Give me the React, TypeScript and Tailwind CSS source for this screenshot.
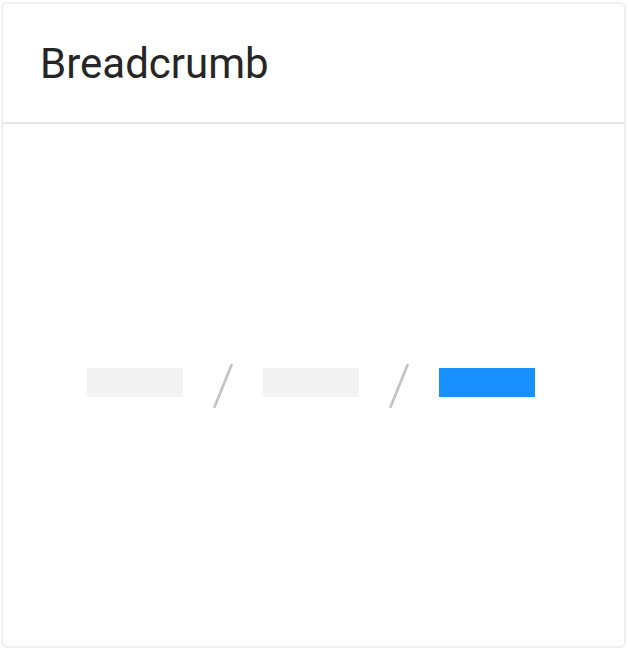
const Slash = () => (
  <svg width="20" height="44" viewBox="0 0 20 44" className="mx-[30px] mt-[7px] shrink-0">
    <line x1="18.5" y1="1" x2="1.5" y2="43" stroke="#c2c2c2" strokeWidth="2.6" strokeLinecap="round" />
  </svg>
);

export default function App() {
  return (
    <div className="h-[649px] w-[627px] bg-white pl-px pt-[2px]" style={{ fontFamily: 'Roboto, "Liberation Sans", sans-serif' }}>
      <div className="flex h-[646px] w-[625px] flex-col rounded-md border-2 border-[#efefef] bg-white">
        <div className="flex h-[120px] items-center border-b-2 border-[#e6e6e6] pl-[37px] pt-[2px]">
          <h1 className="text-[42px] leading-none text-[#262626]">Breadcrumb</h1>
        </div>
        <div className="flex flex-1 items-center justify-center pr-[6px] pb-[6px]">
          <div className="flex items-center">
            <div className="h-[29px] w-[96px] bg-[#f3f3f3]" />
            <Slash />
            <div className="h-[29px] w-[96px] bg-[#f3f3f3]" />
            <Slash />
            <div className="h-[29px] w-[96px] bg-[#1890ff]" />
          </div>
        </div>
      </div>
    </div>
  );
}
